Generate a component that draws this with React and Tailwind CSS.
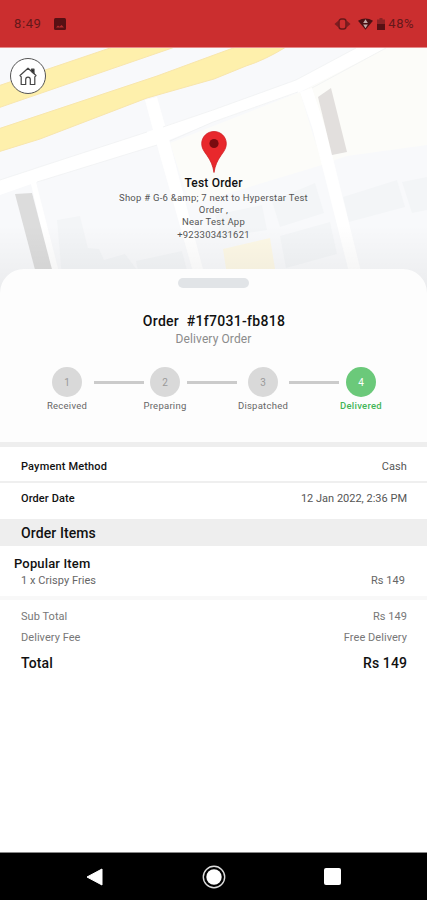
const steps = [
  { id: 1, label: 'Received', line: 'left-[57px]' },
  { id: 2, label: 'Preparing', line: 'left-[52px]' },
  { id: 3, label: 'Dispatched', line: 'left-[56px]' },
  { id: 4, label: 'Delivered', active: true },
];

const StatusBar = () => (
  <div className="h-12 shrink-0 bg-[#cb2e2f] border-b border-[#e58a8a] flex items-center justify-between pl-[14px] pr-[13px] pt-px text-[#65181a]">
    <div className="flex items-center gap-[13px]">
      <span className="text-[13px] leading-4 tracking-[0.6px]">8:49</span>
      <svg width="12" height="12" viewBox="0 0 12 12">
        <rect width="12" height="12" rx="1.5" fill="#571014" />
        <path d="M2 9.500 4 7.500l1.500 1.200L7.600 7 10 9.500Z" fill="#b52a2c" />
      </svg>
    </div>
    <div className="flex items-center">
      {/* Vibrate */}
      <svg width="17" height="12" viewBox="0 0 17 12">
        <path d="M4.500 2.500V9.500L.500 6ZM12.500 2.500V9.500L16.500 6Z" fill="#7d1d20" />
        <rect x="5" y="1" width="7" height="10" rx="2.500" fill="none" stroke="#65181a" strokeWidth="1.400" />
      </svg>
      {/* Wifi */}
      <svg className="ml-[7px]" width="15" height="12" viewBox="0 0 16 12">
        <path d="M0 2.500Q8-2 16 2.500L8 12Z" fill="#4c1013" />
        <path d="M8 1 10.500 5h-5ZM8 10.500 5.500 6.500h5Z" fill="#c3aaa8" />
      </svg>
      {/* Battery */}
      <svg className="ml-[4px]" width="8" height="12" viewBox="0 0 8 12">
        <path d="M2.500 0h3v1.500H8V6H0V1.500h2.500Z" fill="#8c2225" />
        <path d="M0 6h8v6H0Z" fill="#571014" />
      </svg>
      <span className="ml-[3px] text-[13px] leading-4 tracking-[0.5px]">48%</span>
    </div>
  </div>
);

const MapBackground = () => (
  <svg className="absolute inset-x-0 top-0" width="427" height="252" viewBox="0 48 427 252">
    <defs>
      <linearGradient id="mapShade" x1="0" y1="0" x2="0" y2="1">
        <stop offset="0" stopColor="#000" stopOpacity="0" />
        <stop offset="1" stopColor="#000" stopOpacity="0.06" />
      </linearGradient>
    </defs>
    <rect y="48" width="427" height="252" fill="#f8f9fb" />
    <path d="M380 48H427V145L347 156 320 165 305 90Z" fill="#fcfcf9" />
    <path d="M170 143 300 92 322 165 190 205Z" fill="#fcfcf9" />
    {/* Buildings */}
    <g fill="#f3f5f7">
      <path d="M57 220 80 216 88 248 99 249 104 260 125 254 137 270V300H64Z" />
      <path d="M136 261 182 251 192 290H142Z" />
      <path d="M215 215 262 205 267 230 222 237Z" />
      <path d="M272 201 315 183 324 213 280 227Z" />
      <path d="M280 236 330 222 337 254 286 268Z" />
      <path d="M343 197 397 180 405 207 349 222Z" />
      <path d="M402 182 427 177V210L412 213Z" />
    </g>
    <path d="M223 249 270 238 276 275H227Z" fill="#fdf8e6" />
    {/* Streets */}
    <g fill="#fff">
      <path d="M0 180 67 158 153 130 213 110 296 80 356 48H386L300 92 213 122 157 145 37 182 0 195Z" />
      <path d="M145 100 157 97 170 143 211 300H201L157 145Z" />
      <path d="M300 92 312 88 326 130 368 300H356L313 130Z" />
      <path d="M31 184 36 182 66 300H58Z" />
    </g>
    <path d="M0 180 67 158 147 132M157 145 37 182M163 127 213 110 296 80 356 48M170 141 213 122 298 92M312 88 386 48" fill="none" stroke="#f0f1f3" strokeWidth="0.8" />
    <path d="M15 194 32 193 60 300H43Z" fill="#dcdcdc" />
    <path d="M318 97 331 88 347 152 332 155Z" fill="#e2dfdd" />
    {/* Main roads */}
    <g fill="#fef0ac" stroke="#f8e6ad" strokeWidth="1">
      <path d="M-2 86 113 47H175L-2 108Z" />
      <path d="M-2 129 157 76 214 55 236 47H286Q265 60 246 66L214 79 147 98 40 139-2 152Z" />
    </g>
    <rect y="225" width="427" height="75" fill="url(#mapShade)" />
  </svg>
);

const HomeButton = () => (
  <button className="absolute left-[10px] top-[10px] w-9 h-9 rounded-full border-[1.300px] border-[#555] bg-white flex items-center justify-center">
    <svg width="18" height="19" viewBox="0 0 18 19" fill="none" stroke="#444" strokeWidth="1.200" strokeLinejoin="round" strokeLinecap="round">
      <path d="M1 8.500 9 1.200 17 8.500 15.800 9.800V17.500H11.300V12.500Q11.300 10.200 9 10.200T6.700 12.500V17.500H2.200V9.800Z" />
      <path d="M12.500 2.200H15V6.500L12.500 4.200Z" fill="#222" />
    </svg>
  </button>
);

const Pin = () => (
  <svg className="mx-auto" width="26" height="42" viewBox="0 0 26 42">
    <path d="M13 .5C6 .5.700 6 .700 12.600c0 4.700 2.300 7.700 5.300 11.800C9.500 29.300 12 34.500 13 41.500c1-7 3.500-12.200 7-17.100 3-4.100 5.300-7.100 5.300-11.800C25.300 6 20 .5 13 .5Z" fill="#e8282c" stroke="#cf1f24" strokeWidth="0.800" />
    <circle cx="13" cy="12.500" r="4.600" fill="#7a0b10" />
  </svg>
);

const Row = ({ label, value, className = '', labelClass = '', valueClass = '' }) => (
  <div className={`flex items-center justify-between pl-[21px] ${className}`}>
    <span className={labelClass}>{label}</span>
    <span className={valueClass}>{value}</span>
  </div>
);

const App = () => {
  return (
    <div className="w-[427px] h-[900px] flex flex-col overflow-hidden bg-white font-['Roboto',sans-serif] text-[#111]">
      <StatusBar />

      {/* Map */}
      <div className="relative h-[221px] shrink-0 pt-[83px] text-center">
        <MapBackground />
        <HomeButton />
        <div className="relative">
          <Pin />
          <h2 className="mt-[3px] text-[12px] leading-[14px] font-medium tracking-[0.2px]">Test Order</h2>
          <div className="mt-[2px] text-[9.500px] leading-[12px] tracking-[0.250px] text-[#555]">
            <p>Shop # G-6 &amp;amp; 7 next to Hyperstar Test</p>
            <p>Order ,</p>
            <p>Near Test App</p>
            <p className="mt-px">+923303431621</p>
          </div>
        </div>
      </div>

      {/* Order status */}
      <div className="relative h-[173px] shrink-0 rounded-t-[24px] bg-[#fdfdfd] pt-[9px] text-center">
        <div className="mx-auto w-[71px] h-[10px] rounded-full bg-[#e1e4e7]"></div>
        <h1 className="mt-[25px] pl-px text-[14px] leading-4 font-medium tracking-[0.300px] whitespace-pre">Order  #1f7031-fb818</h1>
        <p className="mt-[3px] text-[12px] leading-[14px] tracking-[0.100px] text-[#8b8b8b]">Delivery Order</p>
        <div className="mt-[21px] pl-[37px] pr-[36px] flex justify-between">
          {steps.map((step) => (
            <div key={step.id} className="relative w-[60px] flex flex-col items-center">
              <div className={`w-[30px] h-[30px] rounded-full flex items-center justify-center text-[10px] ${step.active ? 'bg-[#6bc97a] text-white' : 'bg-[#d9d9d9] text-[#999]'}`}>
                {step.id}
              </div>
              <span className={`mt-[3px] text-[9.500px] leading-[11px] tracking-[0.250px] ${step.active ? 'text-[#43b557] font-medium' : 'text-[#666]'}`}>{step.label}</span>
              {step.line && <div className={`absolute top-[14px] w-[50px] h-[3px] bg-[#cbcbcb] ${step.line}`}></div>}
            </div>
          ))}
        </div>
      </div>
      <div className="h-[5px] shrink-0 bg-[#eeeeee]"></div>

      {/* Details */}
      <Row label="Payment Method" value="Cash" className="h-[34px] pt-[6px] pr-5 text-[11px]" labelClass="font-medium tracking-[0.150px]" valueClass="text-[#555] tracking-[0.100px]" />
      <div className="h-[2px] shrink-0 bg-[#efefef]"></div>
      <Row label="Order Date" value="12 Jan 2022, 2:36 PM" className="h-[36px] pb-[3px] pr-5 text-[11px]" labelClass="font-medium tracking-[0.100px]" valueClass="text-[#555]" />
      <div className="h-[27px] shrink-0 bg-[#eeeeee] pl-[21px] pt-px flex items-center text-[14px] font-medium tracking-[0.100px]">Order Items</div>

      {/* Items */}
      <div className="h-[50px] shrink-0 pt-[10px]">
        <h3 className="pl-[14px] text-[13px] leading-4 font-medium tracking-[0.150px]">Popular Item</h3>
        <Row label="1 x Crispy Fries" value="Rs 149" className="mt-[2px] pr-[22px] text-[11px] leading-[14px] text-[#666] tracking-[0.050px]" />
      </div>
      <div className="h-[4px] shrink-0 bg-[#f8f8f8]"></div>

      {/* Totals */}
      <div className="grow pt-[10px]">
        <Row label="Sub Total" value="Rs 149" className="h-[14px] pr-5 text-[11px] text-[#777] tracking-[0.050px]" />
        <Row label="Delivery Fee" value="Free Delivery" className="mt-[7px] h-[14px] pr-5 text-[11px] text-[#777] tracking-[0.050px]" />
        <Row label="Total" value="Rs 149" className="mt-[9px] h-[18px] pr-5 text-[14px] font-medium tracking-[0.100px]" />
      </div>

      {/* Navigation bar */}
      <div className="h-12 shrink-0 bg-black border-t border-[#888] flex items-center justify-between pl-[86px] pr-[86px]">
        <svg width="17" height="18" viewBox="0 0 17 18">
          <path d="M1 9 16 1V17Z" fill="#fff" stroke="#fff" strokeLinejoin="round" />
        </svg>
        <svg width="24" height="24" viewBox="0 0 24 24">
          <circle cx="12" cy="12" r="10.700" fill="none" stroke="#ddd" strokeWidth="1.400" />
          <circle cx="12" cy="12" r="7.700" fill="#fff" />
        </svg>
        <div className="w-[17px] h-[17px] rounded-[2px] bg-white"></div>
      </div>
    </div>
  );
};

export default App;
